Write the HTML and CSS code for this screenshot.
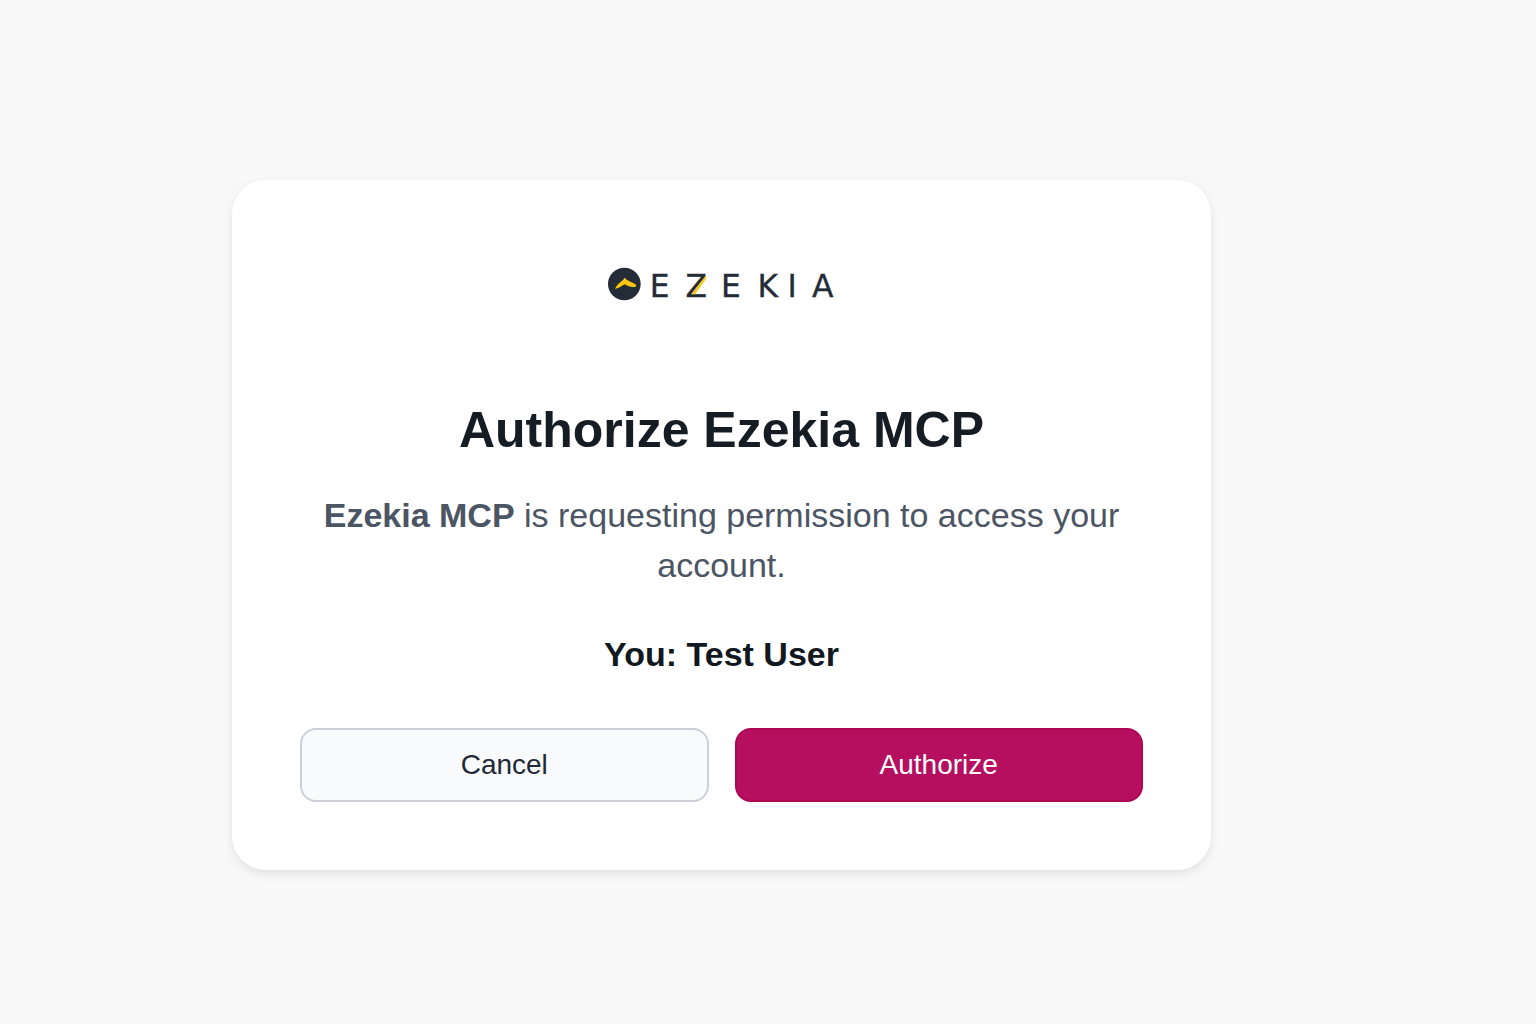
FILE: index.html
```html
<!DOCTYPE html>
<html lang="en">
<head>
    <meta charset="UTF-8">
    <meta name="viewport" content="width=device-width, initial-scale=1.0">
    <title>Authorize Ezekia MCP</title>
    <link rel="stylesheet" href="styles.css">
</head>
<body>
    <main class="container">
        <svg class="logo" viewBox="0 0 684 102" role="img" aria-label="Ezekia">
            <circle class="logo-badge" cx="49" cy="51" r="49"/>
            <path class="logo-accent" d="M21 65 C26 54 37 45 45 39 L50 32 L56 38 C65 43 76 47 84 53 C85 57 83 60 79 60 C69 61 60 58 51 52 C43 55 33 65 21 65 Z"/>
            <text class="logo-text" x="155 265 369 479 552 644" y="90">EZEKIA</text>
            <polygon class="logo-accent" points="294,25 294,36 261,82 250,82"/>
        </svg>

        <h1>Authorize Ezekia MCP</h1>
        <p class="message"><strong>Ezekia MCP</strong> is requesting permission to access your account.</p>
        <p class="user">You: Test User</p>

        <form class="actions">
            <button type="button" class="btn btn-cancel">Cancel</button>
            <button type="submit" class="btn btn-authorize">Authorize</button>
        </form>
    </main>
</body>
</html>
```
FILE: styles.css
```css
* {
    box-sizing: border-box;
}
body {
    font-family: "Liberation Sans", Arial, sans-serif;
    background-color: #f8f8f9;
    margin: 0;
    padding: 180px 325px 80px 232px;
}
.container {
    background: white;
    padding: 68px;
    border-radius: 34px;
    box-shadow: 0 4px 10px rgba(0, 0, 0, 0.09);
    text-align: center;
}
.logo {
    display: block;
    width: 228px;
    height: 34px;
    margin: 19px auto 99px;
    overflow: visible;
}
.logo-badge {
    fill: #232c37;
}
.logo-accent {
    fill: #fcc80e;
}
.logo-text {
    font-family: "DejaVu Sans", sans-serif;
    font-size: 94px;
    text-anchor: middle;
    fill: #232c37;
    stroke: #232c37;
    stroke-width: 1px;
}
h1 {
    margin: 0 0 30px;
    font-size: 50px;
    line-height: 60px;
    color: #151c24;
}
.message {
    margin: 0 0 39px;
    font-size: 34px;
    line-height: 50px;
    color: #4b5563;
}
.user {
    margin: 0 0 49px;
    font-size: 34px;
    line-height: 50px;
    font-weight: bold;
    color: #111820;
}
.actions {
    display: grid;
    grid-template-columns: 1fr 1fr;
    gap: 26px;
}
.btn {
    height: 74px;
    border: 2px solid #cdcfd8;
    border-radius: 16px;
    font-family: inherit;
    font-size: 28px;
    cursor: pointer;
}
.btn-cancel {
    background: #f9fafb;
    color: #1f2937;
}
.btn-authorize {
    background: #b60f5f;
    border-color: #ad0753;
    color: white;
}
```
